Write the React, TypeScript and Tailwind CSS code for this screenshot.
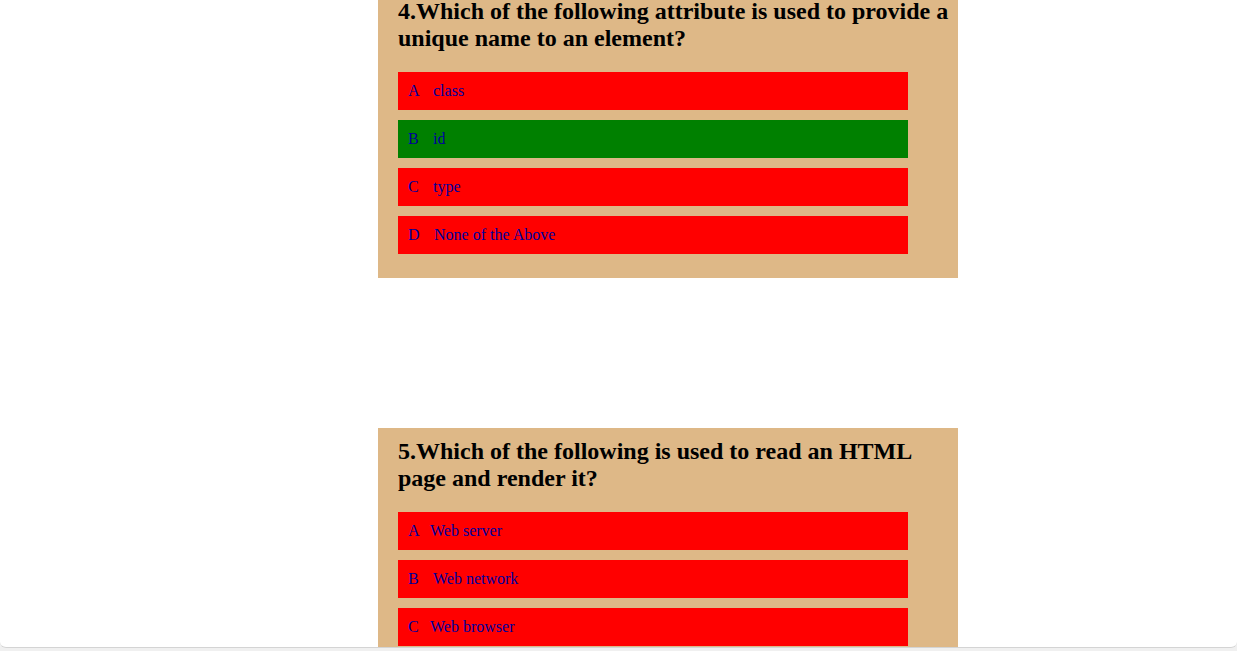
type Option = { key: string; text: string; gap: string; right?: boolean };

type Question = { title: string; options: Option[] };

const questions: Question[] = [
  {
    title: "4.Which of the following attribute is used to provide a unique name to an element?",
    options: [
      { key: "A", text: "class", gap: "w-[25px]" },
      { key: "B", text: "id", gap: "w-[25px]", right: true },
      { key: "C", text: "type", gap: "w-[25px]" },
      { key: "D", text: "None of the Above", gap: "w-[26px]" },
    ],
  },
  {
    title: "5.Which of the following is used to read an HTML page and render it?",
    options: [
      { key: "A", text: "Web server", gap: "w-[22px]" },
      { key: "B", text: "Web network", gap: "w-[25px]" },
      { key: "C", text: "Web browser", gap: "w-[22px]" },
      { key: "D", text: "None of the Above", gap: "w-[26px]" },
    ],
  },
];

const QuizCard = ({ q }: { q: Question }) => (
  <div className="w-[580px] bg-[#deb887] pt-[10px] pl-5 pb-[24px]">
    <h2 className="text-[24px] leading-[27px] font-bold text-black">{q.title}</h2>
    <div className="mt-[20px] flex flex-col gap-[10px]">
      {q.options.map((o) => (
        <div
          key={o.key}
          className={`w-[510px] h-[38px] flex items-center pl-[10px] text-[16px] text-[#00009c] ${
            o.right ? "bg-[#008000]" : "bg-[#ff0000]"
          }`}
        >
          <span className={`inline-block ${o.gap}`}>{o.key}</span>
          <span>{o.text}</span>
        </div>
      ))}
    </div>
  </div>
);

export default function App() {
  return (
    <div className="h-[651px] bg-[#f0f0f0] overflow-hidden">
      <div
        className="h-[648px] bg-white rounded-b-[6px] border-b border-[#d4d4d4] overflow-hidden"
        style={{ fontFamily: '"Liberation Serif", "Times New Roman", serif' }}
      >
        <div className="pl-[378px] -mt-[12px] flex flex-col gap-[150px]">
          {questions.map((q, i) => (
            <QuizCard key={i} q={q} />
          ))}
        </div>
      </div>
    </div>
  );
}
